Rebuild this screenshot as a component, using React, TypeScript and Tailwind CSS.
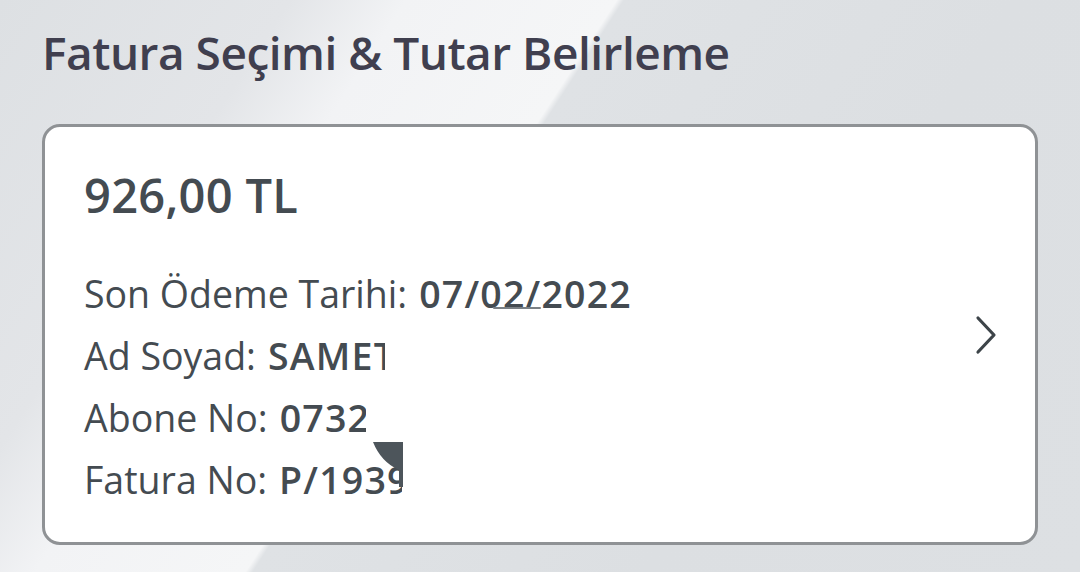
import React from 'react';

const rows = [
    { label: 'Son Ödeme Tarihi:', value: '07/02/2022', clip: '' },
    { label: 'Ad Soyad:', value: 'SAMET', clip: 'max-w-[117px]' },
    { label: 'Abone No:', value: '07324', clip: 'max-w-[86px]' },
    { label: 'Fatura No:', value: 'P/19395', clip: 'max-w-[123px]' },
];

function Chevron() {
    return (
        <svg width="22" height="40" viewBox="0 0 22 40" fill="none">
            <polyline points="3,3 19,20 3,37" stroke="#3d4449" strokeWidth="3.2" strokeLinecap="round" strokeLinejoin="round" />
        </svg>
    );
}

export default function App() {
    return (
        <main
            className="w-[1080px] h-[572px] overflow-hidden px-[42px] pt-[22px] bg-[linear-gradient(123deg,#dde0e3_0%,#e3e5e8_20%,#f2f3f5_28%,#f5f6f7_42.5%,#dfe2e5_43%,#dcdfe2_70%,#dde0e3_100%)]"
            style={{ fontFamily: '"Open Sans", Lato, sans-serif' }}
        >
            <h1 className="text-[46px] leading-[60px] font-semibold text-[#403f4f] tracking-[-0.5px]">
                Fatura Seçimi &amp; Tutar Belirleme
            </h1>

            <section className="mt-[42px] h-[421px] rounded-[18px] border-[3px] border-[#8f9295] bg-white flex items-center pl-[39px] pr-[38px]">
                <div className="flex-1 flex flex-col self-start pt-[38px] text-[#444b51]">
                    <div className="text-[47px] leading-[60px] font-semibold tracking-[0.3px]">926,00 TL</div>

                    <div className="mt-[38px] flex flex-col">
                        {rows.map((r, i) => (
                            <div key={i} className="relative flex items-baseline text-[37.5px] leading-[62px] whitespace-nowrap">
                                <span className="font-normal">{r.label}</span>
                                <span className={`ml-[12px] font-semibold tracking-[1.2px] overflow-hidden ${r.clip}`}>{r.value}</span>
                                {i === 0 && <span className="absolute left-[409px] top-[44px] w-[48px] h-[2px] bg-[#7a8085] rounded-full" />}
                                {i === 3 && (
                                    <svg className="absolute left-[289px] top-[-7px]" width="30" height="45" viewBox="0 0 30 45">
                                        <path d="M0 0 H30 V45 H26 V28 Q8 20 0 0 Z" fill="#4d555b" />
                                    </svg>
                                )}
                            </div>
                        ))}
                    </div>
                </div>
                <Chevron />
            </section>
        </main>
    );
}
